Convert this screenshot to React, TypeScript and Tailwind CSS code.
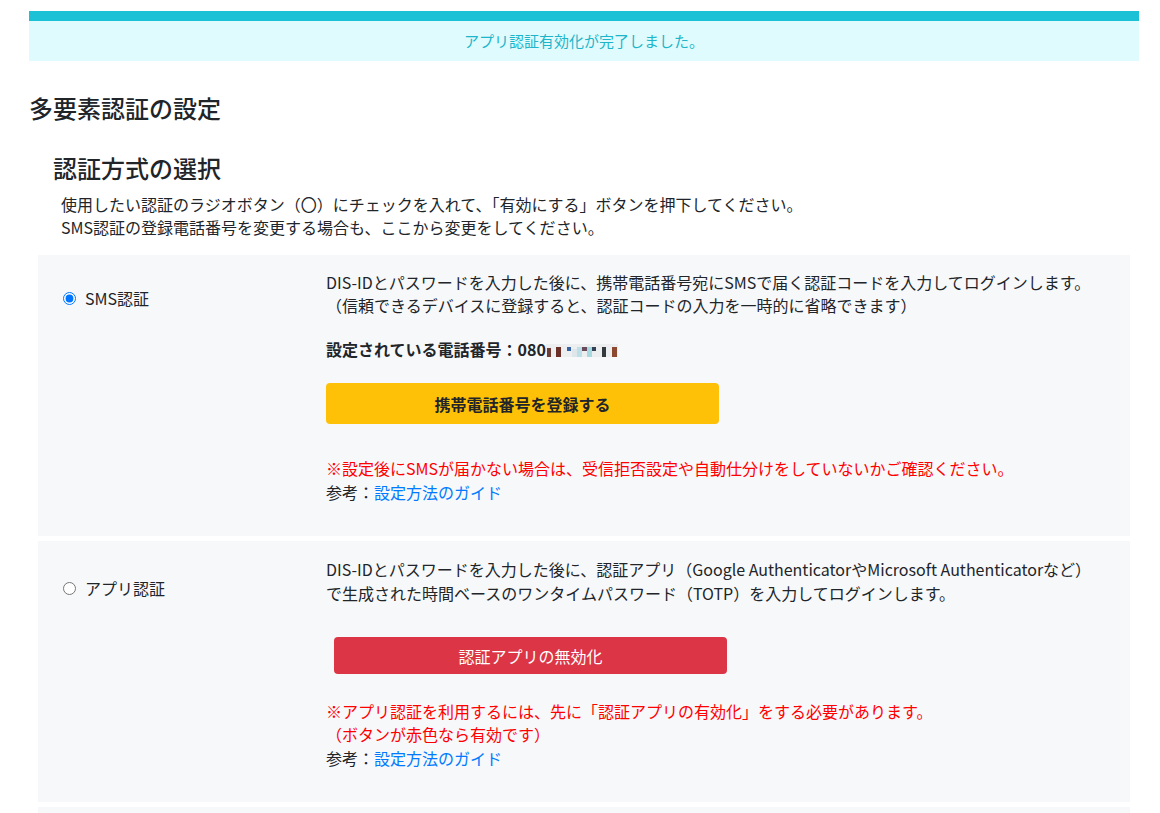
import React from "react";

const font = { fontFamily: '"Noto Sans CJK JP", "Noto Sans", sans-serif' };

// pixelated (mosaic) phone digits
const mosaic: { x: number; y: number; w: number; h: number; c: string }[] = [
  { x: 0, y: 0, w: 72, h: 13, c: "#eceef0" },
  { x: 1, y: 4, w: 4, h: 9, c: "#6d3e35" },
  { x: 10, y: 3, w: 5, h: 10, c: "#6a3028" },
  { x: 21, y: 3, w: 4, h: 4, c: "#3462a3" },
  { x: 26, y: 5, w: 5, h: 8, c: "#dfe6ea" },
  { x: 31, y: 3, w: 5, h: 10, c: "#bcdfe8" },
  { x: 36, y: 3, w: 5, h: 4, c: "#6a4a5a" },
  { x: 41, y: 3, w: 5, h: 10, c: "#a8d8e0" },
  { x: 46, y: 3, w: 4, h: 4, c: "#344055" },
  { x: 56, y: 3, w: 4, h: 10, c: "#343a3d" },
  { x: 66, y: 3, w: 5, h: 10, c: "#8b4a30" },
];

function Mosaic() {
  return (
    <svg width="72" height="13" viewBox="0 0 72 13" className="inline-block align-[-1px]">
      {mosaic.map((r, i) => (
        <rect key={i} x={r.x} y={r.y} width={r.w} height={r.h} fill={r.c} />
      ))}
    </svg>
  );
}

function Guide() {
  return (
    <p className="leading-[24px]">
      参考：<a href="#" className="text-[#007bff]">設定方法のガイド</a>
    </p>
  );
}

export default function App() {
  return (
    <div style={font} className="min-h-[813px] bg-white text-[#212529] text-[16px]">
      <div className="ml-[29px] mr-[21px] pt-[11px]">
        {/* success alert */}
        <div className="border-t-[10px] border-[#1dc1d5] bg-[#e0fbfe] h-[50px] flex items-center justify-center text-[#1cb5c9] text-[15px]">
          アプリ認証有効化が完了しました。
        </div>

        <h1 className="mt-[32px] text-[24px] leading-[30px] font-medium">多要素認証の設定</h1>

        <h2 className="mt-[30px] ml-[24px] text-[24px] leading-[30px] font-medium">認証方式の選択</h2>
        <div className="ml-[32px] mt-[10px] leading-[23px]">
          <p>使用したい認証のラジオボタン（〇）にチェックを入れて、「有効にする」ボタンを押下してください。</p>
          <p>SMS認証の登録電話番号を変更する場合も、ここから変更をしてください。</p>
        </div>

        <div className="mx-[9px] mt-[16px] flex flex-col gap-[5px]">
          {/* SMS */}
          <div className="bg-[#f7f8fa] flex pl-[25px] pt-[16px] pb-[31px] h-[281px]">
            <label className="w-[263px] flex items-center gap-[9px] h-[24px] mt-[15px] self-start">
              <input type="radio" name="mfa" defaultChecked className="m-0 w-[13px] h-[13px] accent-[#0075ff]" />
              <span>SMS認証</span>
            </label>
            <div>
              <p className="leading-[23px]">
                DIS-IDとパスワードを入力した後に、携帯電話番号宛にSMSで届く認証コードを入力してログインします。
                <br />
                （信頼できるデバイスに登録すると、認証コードの入力を一時的に省略できます）
              </p>
              <p className="mt-[20px] leading-[24px] font-bold">
                設定されている電話番号：080
                <Mosaic />
              </p>
              <button className="mt-[22px] w-[393px] h-[41px] rounded-[4px] bg-[#ffc107] font-bold text-[#212529]">
                携帯電話番号を登録する
              </button>
              <p className="mt-[32px] leading-[24px] text-[#ff0000]">
                ※設定後にSMSが届かない場合は、受信拒否設定や自動仕分けをしていないかご確認ください。
              </p>
              <Guide />
            </div>
          </div>

          {/* App */}
          <div className="bg-[#f7f8fa] flex pl-[25px] pt-[16px] pb-[31px] h-[261px]">
            <label className="w-[263px] flex items-center gap-[9px] h-[24px] mt-[19px] self-start">
              <input type="radio" name="mfa" className="m-0 w-[13px] h-[13px] accent-[#0075ff]" />
              <span>アプリ認証</span>
            </label>
            <div>
              <p className="leading-[24px]">
                DIS-IDとパスワードを入力した後に、認証アプリ（Google AuthenticatorやMicrosoft Authenticatorなど）
                <br />
                で生成された時間ベースのワンタイムパスワード（TOTP）を入力してログインします。
              </p>
              <button className="mt-[32px] ml-[8px] w-[393px] h-[37px] rounded-[4px] bg-[#dc3545] text-white">
                認証アプリの無効化
              </button>
              <p className="mt-[26px] leading-[23px] text-[#ff0000]">
                ※アプリ認証を利用するには、先に「認証アプリの有効化」をする必要があります。
                <br />
                （ボタンが赤色なら有効です）
              </p>
              <Guide />
            </div>
          </div>

          <div className="bg-[#f7f8fa] h-[40px]" />
        </div>
      </div>
    </div>
  );
}
